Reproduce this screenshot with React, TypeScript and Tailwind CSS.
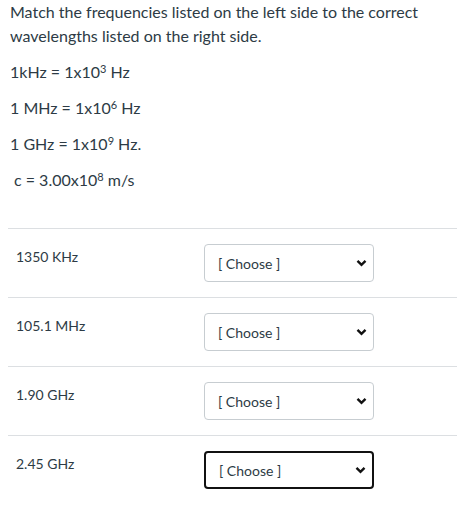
const rows = ["1350 KHz", "105.1 MHz", "1.90 GHz", "2.45 GHz"];

const Chevron = () => (
  <svg width="11" height="8" viewBox="0 0 11 8" className="absolute right-[6px] top-1/2 -translate-y-1/2">
    <path d="M1.5 1.8 L5.5 5.8 L9.5 1.8" fill="none" stroke="#111" strokeWidth="2.4" />
  </svg>
);

const App = () => {
  return (
    <div
      className="w-[457px] h-[508px] bg-white text-[#2d3b45] overflow-hidden"
      style={{ fontFamily: "Lato, 'Noto Sans', sans-serif" }}
    >
      <div className="px-[10px] pt-0 text-[16px] leading-[24px]">
        <p>Match the frequencies listed on the left side to the correct wavelengths listed on the right side.</p>
        <p className="mt-[12px]">
          1kHz = 1x10<sup className="text-[11px]">3</sup> Hz
        </p>
        <p className="mt-[12px]">
          1 MHz = 1x10<sup className="text-[11px]">6</sup> Hz
        </p>
        <p className="mt-[12px]">
          1 GHz = 1x10<sup className="text-[11px]">9</sup> Hz.
        </p>
        <p className="mt-[12px] pl-[4px]">
          c = 3.00x10<sup className="text-[11px]">8</sup> m/s
        </p>
      </div>

      <div className="ml-[8px] mt-[36px]">
        {rows.map((r, i) => (
          <div key={r} className="flex border-t border-[#dcdfe2] h-[69px] pt-[15px]">
            <div className="w-[196px] pl-[8px] pt-[3px] text-[14px] leading-[20px]">{r}</div>
            <div
              className={
                "relative w-[170px] h-[38px] rounded-[4px] bg-white flex items-center pl-[13px] text-[14px] " +
                (i === 3 ? "border-2 border-[#111] pl-[12px]" : "border border-[#c7cdd1]")
              }
            >
              [ Choose ]
              <Chevron />
            </div>
          </div>
        ))}
      </div>
    </div>
  );
};

export default App;
